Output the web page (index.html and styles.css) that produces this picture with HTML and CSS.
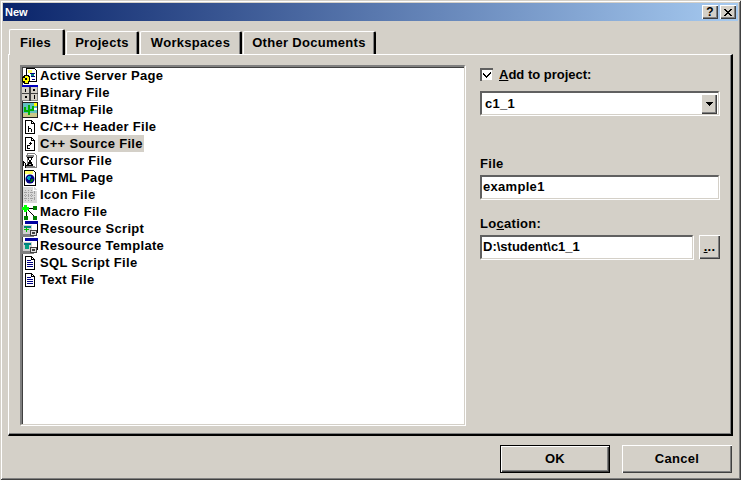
FILE: index.html
```html
<!DOCTYPE html>
<html lang="en">
<head>
<meta charset="utf-8">
<title>New</title>
<link rel="stylesheet" href="styles.css">
</head>
<body>
<div class="window">
  <div class="titlebar">
    <span class="title">New</span>
    <span class="tbtn">?</span>
    <span class="tbtn tclose">
      <svg width="8" height="7" viewBox="0 0 8 7" shape-rendering="crispEdges"><path fill="#000" d="M0 0h2v1h1v1h2V1h1V0h2v1H7v1H6v1H5v1h1v1h1v1h1v1H6V6H5V5H3v1H2v1H0V6h1V5h1V4h1V3H2V2H1V1H0z"/></svg>
    </span>
  </div>
  <div class="tabs">
    <div class="tab active">Files</div>
    <div class="tab w73">Projects</div>
    <div class="tab w102">Workspaces</div>
    <div class="tab w133">Other Documents</div>
  </div>
  <div class="panel">
    <ul class="list">
      <li class="row"><svg class="ico" width="16" height="16" viewBox="0 0 16 16" shape-rendering="crispEdges"><path fill="#fff" stroke="#000" d="M4.500 .5h8l2 2v11h-10z"/><rect x="6" y="2" width="4" height="3" fill="#ffff66"/><path fill="#000080" d="M8 5h5v1H8zM9 8h4v1H9zM10 11h3v1h-3z"/><path fill="#008080" d="M9 6h3v2H9z"/><path fill="#000" d="M2 7h5v1h1v6H7v2H2v-1H1v-1H0V9h1V8h1z"/><path fill="#ffff00" d="M3 8h3v1h1v4H6v2H3v-2H1v-3h2z"/><rect x="3" y="10" width="2" height="2" fill="#000"/></svg><span>Active Server Page</span></li>
      <li class="row"><svg class="ico" width="16" height="16" viewBox="0 0 16 16" shape-rendering="crispEdges"><rect width="16" height="2" fill="#0000c0"/><rect y="2" width="16" height="14" fill="#d4d0c8"/><path fill="#808080" d="M0 15h16v1H0zM15 2h1v14h-1z"/><path fill="#404040" d="M7 2h2v14H7zM0 8h16v1H0z"/><path fill="#000" d="M3 4h1v3H3zM11 4h2v2h-2zM3 11h2v2H3zM12 10h1v4h-1z"/></svg><span>Binary File</span></li>
      <li class="row"><svg class="ico" width="16" height="16" viewBox="0 0 16 16" shape-rendering="crispEdges"><rect width="16" height="16" fill="#202020"/><rect x="1" y="1" width="14" height="14" fill="#60c0c0"/><rect x="1" y="11" width="14" height="4" fill="#c8c888"/><path fill="#00b000" d="M6 3h2v10H6zM2 5h2v3h2v2H2zM10 4h2v5H8V7h2z"/><rect x="12" y="1" width="3" height="3" fill="#ffff00"/><rect x="12" y="6" width="3" height="2" fill="#fff"/></svg><span>Bitmap File</span></li>
      <li class="row"><svg class="ico" width="16" height="16" viewBox="0 0 16 16" shape-rendering="crispEdges"><path fill="#fff" stroke="#000" d="M3.500 1.500h6l3 3v10h-9z"/><path fill="none" stroke="#000" d="M9.500 1.500v3h3"/><path fill="#000" d="M6 7h1v6H6zM7 9h2v1H7zM9 10h1v3H9z"/></svg><span>C/C++ Header File</span></li>
      <li class="row"><svg class="ico" width="16" height="16" viewBox="0 0 16 16" shape-rendering="crispEdges"><path fill="#fff" stroke="#000" d="M3.500 1.500h6l3 3v10h-9z"/><path fill="none" stroke="#000" d="M9.500 1.500v3h3"/><path fill="#000" d="M8 6h1v1h1v1H9v1H8V8H7V7h1zM5 9h3v1H6v2h2v1H5z"/></svg><span class="selected">C++ Source File</span></li>
      <li class="row"><svg class="ico" width="16" height="16" viewBox="0 0 16 16" shape-rendering="crispEdges"><path fill="#fff" stroke="#808080" d="M5.500 .5h7l2 2v12h-9z"/><path fill="#808080" d="M4 2h8v2H4zM3 13h10v2H3z"/><path fill="#000" d="M5 4h6v1h-1v2H9v2h1v2h1v2H5v-2h1V9h1V7H6V5H5z"/><rect x="7" y="5" width="2" height="2" fill="#fff"/><rect x="7" y="11" width="2" height="1" fill="#c0c0c0"/><path fill="#000" d="M1 8h1v1h1v1h1v2h1v1H4v2H3v-3H2v1H1z"/><path fill="#fff" d="M2 10h1v2H2z"/></svg><span>Cursor File</span></li>
      <li class="row"><svg class="ico" width="16" height="16" viewBox="0 0 16 16" shape-rendering="crispEdges"><path fill="#fff" stroke="#000" d="M2.500 .5h9l2 2v13h-11z"/><path fill="#ffff66" d="M3 1h8v3H3z"/><circle cx="8" cy="9" r="4.500" fill="#000080" shape-rendering="auto"/><path fill="#00a0c0" d="M6 6h3v2H8v2H6V9H5V7h1z"/><path fill="#008000" d="M9 9h2v2h-1v1H8v-1h1z"/></svg><span>HTML Page</span></li>
      <li class="row"><svg class="ico" width="16" height="16" viewBox="0 0 16 16" shape-rendering="crispEdges"><path fill="#d8d8d8" d="M1 0h11l3 3v13H1z"/><path fill="none" stroke="#a0a0a0" stroke-dasharray="1 1" d="M3.500 3v11M6.500 3v11M9.500 3v11M12.500 4v10M2 5.500h12M2 8.500h12M2 11.500h12"/><path fill="#fff" d="M11 0h1v3h3v1h-4z"/></svg><span>Icon File</span></li>
      <li class="row"><svg class="ico" width="16" height="16" viewBox="0 0 16 16" shape-rendering="crispEdges"><path stroke="#000" fill="none" d="M5 4.500h6M4.500 6v6M6 6l6 6"/><path fill="#00ff00" d="M2 1h3v2h2v3H5v2H2V6H0V3h2z"/><rect x="11" y="2" width="4" height="4" fill="#008000"/><rect y="12" x="2" width="4" height="4" fill="#008000"/><rect x="11" y="12" width="4" height="4" fill="#008000"/></svg><span>Macro File</span></li>
      <li class="row"><svg class="ico" width="16" height="16" viewBox="0 0 16 16" shape-rendering="crispEdges"><path fill="#808080" d="M0 4h12v12H0z"/><rect x="3" width="13" height="12" fill="#fff"/><rect x="3" width="13" height="3" fill="#0000a0"/><path fill="#000" d="M15 3h1v9h-1z"/><rect x="1" y="4" width="9" height="9" fill="#d0d0d0"/><path fill="#008080" d="M2 5h7v2H2z"/><path fill="#00c000" d="M4 6h1v2h2v1H5v2H4V9H2V8h2z"/><rect x="8" y="9" width="7" height="6" fill="#e0e0e0"/><path fill="#404040" d="M8 9h7v1H8zM8 14h7v1H8zM8 9h1v6H8zM14 9h1v6h-1zM10 11h3v2h-3z"/></svg><span>Resource Script</span></li>
      <li class="row"><svg class="ico" width="16" height="16" viewBox="0 0 16 16" shape-rendering="crispEdges"><path fill="#808080" d="M0 4h12v12H0z"/><rect x="3" width="13" height="12" fill="#fff"/><rect x="3" width="13" height="3" fill="#0000a0"/><path fill="#000" d="M15 3h1v9h-1z"/><rect x="1" y="4" width="9" height="9" fill="#d0d0d0"/><path fill="#008080" d="M2 5h7v2H2z"/><path fill="#00a080" d="M3 7h4v4H3z"/><rect x="8" y="9" width="7" height="6" fill="#e0e0e0"/><path fill="#404040" d="M8 9h7v1H8zM8 14h7v1H8zM8 9h1v6H8zM14 9h1v6h-1zM10 11h3v2h-3z"/></svg><span>Resource Template</span></li>
      <li class="row"><svg class="ico" width="16" height="16" viewBox="0 0 16 16" shape-rendering="crispEdges"><path fill="#fff" stroke="#000" d="M3.500 1.500h6l3 3v10h-9z"/><path fill="none" stroke="#000" d="M9.500 1.500v3h3"/><path fill="#000080" d="M5 5h4v1H5zM5 7h6v1H5zM5 9h6v1H5zM5 11h6v1H5z"/></svg><span>SQL Script File</span></li>
      <li class="row"><svg class="ico" width="16" height="16" viewBox="0 0 16 16" shape-rendering="crispEdges"><path fill="#fff" stroke="#000" d="M3.500 1.500h6l3 3v10h-9z"/><path fill="none" stroke="#000" d="M9.500 1.500v3h3"/><path fill="#000080" d="M5 5h4v1H5zM5 7h6v1H5zM5 9h6v1H5zM5 11h6v1H5z"/></svg><span>Text File</span></li>
    </ul>
    <div class="side">
      <div class="check-row">
        <span class="check"><svg width="9" height="9" viewBox="0 0 9 9" shape-rendering="crispEdges"><path fill="#000" d="M8 1v2H7v1H6v1H5v1H4v1H3V6H2V5H1V4H0V2h1v1h1v1h1v1h1V4h1V3h1V2h1V1z"/></svg></span>
        <span class="tight"><u>A</u>dd to project:</span>
      </div>
      <div class="field combo">
        <span class="value">c1_1</span>
        <span class="arrow"><svg width="7" height="4" viewBox="0 0 7 4" shape-rendering="crispEdges"><path fill="#000" d="M0 0h7v1H6v1H5v1H4v1H3V3H2V2H1V1H0z"/></svg></span>
      </div>
      <label class="label l-file">File</label>
      <div class="field"><span class="value">example1</span></div>
      <label class="label l-loc">Lo<u>c</u>ation:</label>
      <div class="loc-row">
        <div class="field grow"><span class="value tight">D:\student\c1_1</span></div>
        <div class="browse"><u>.</u>..</div>
      </div>
    </div>
  </div>
  <div class="footer">
    <div class="btn default">OK</div>
    <div class="btn">Cancel</div>
  </div>
</div>
</body>
</html>
```
FILE: styles.css
```css
html, body {
  margin: 0;
  padding: 0;
}
body {
  width: 741px;
  height: 480px;
  overflow: hidden;
  background: #d4d0c8;
  color: #000;
  font: bold 13px/16px "Liberation Sans", Arial, sans-serif;
  letter-spacing: 0.3px;
}
.window {
  box-sizing: border-box;
  width: 741px;
  height: 480px;
  padding: 3px;
  background: #d4d0c8;
  box-shadow: inset 1px 1px 0 #d4d0c8, inset -1px -1px 0 #404040, inset 2px 2px 0 #fff, inset -2px -2px 0 #808080;
}
.titlebar {
  display: flex;
  align-items: center;
  height: 18px;
  padding-right: 2px;
  gap: 2px;
  background: linear-gradient(90deg, #0a246a, #a6caf0);
  color: #fff;
}
.title {
  flex: 1;
  padding-left: 2px;
  font-size: 11px;
  letter-spacing: 0;
}
.tbtn {
  box-sizing: border-box;
  display: flex;
  align-items: center;
  justify-content: center;
  width: 16px;
  height: 14px;
  background: #d4d0c8;
  color: #000;
  font-size: 12px;
  line-height: 12px;
  box-shadow: inset 1px 1px 0 #fff, inset -1px -1px 0 #404040, inset -2px -2px 0 #808080;
}
.tabs {
  display: flex;
  align-items: flex-end;
  height: 25px;
  margin: 8px 0 0 6px;
  position: relative;
  z-index: 1;
}
.tab {
  box-sizing: border-box;
  display: flex;
  align-items: center;
  justify-content: center;
  height: 23px;
  margin-left: 1px;
  background: #d4d0c8;
  border-top: 1px solid #fff;
  border-left: 1px solid #fff;
  border-right: 2px solid #000;
  border-radius: 2px 2px 0 0;
  box-shadow: inset -1px 0 0 #808080;
}
.tab.active {
  width: 56px;
  height: 26px;
  margin: 0 0 -1px 0;
  padding-right: 2px;
}
.w73 {
  width: 73px;
}
.w102 {
  width: 102px;
}
.w133 {
  width: 133px;
}
.panel {
  box-sizing: border-box;
  display: flex;
  align-items: flex-start;
  width: 725px;
  height: 382px;
  margin-left: 5px;
  padding: 10px 11px 0;
  border-top: 1px solid #fff;
  border-left: 1px solid #fff;
  border-right: 2px solid #000;
  border-bottom: 2px solid #000;
  box-shadow: inset -1px -1px 0 #808080;
}
.list {
  box-sizing: border-box;
  flex: none;
  width: 445px;
  height: 360px;
  margin: 0 1px 0 0;
  padding: 0;
  list-style: none;
  background: #fff;
  border-top: 2px solid #808080;
  border-left: 2px solid #808080;
  border-right: 1px solid #d4d0c8;
  border-bottom: 1px solid #d4d0c8;
  box-shadow: inset 1px 1px 0 #404040, 1px 1px 0 #fff;
}
.row {
  display: flex;
  align-items: center;
  height: 17px;
}
.ico {
  flex: none;
}
.row span {
  padding: 0 1px 0 2px;
  height: 17px;
  line-height: 17px;
}
.row .selected {
  background: #d4d0c8;
}
.side {
  display: flex;
  flex-direction: column;
  width: 240px;
  margin-left: 14px;
}
.tight {
  letter-spacing: 0;
}
.check-row {
  display: flex;
  align-items: center;
  gap: 6px;
  height: 13px;
  margin-top: 3px;
}
.check {
  box-sizing: border-box;
  display: flex;
  align-items: center;
  justify-content: center;
  width: 13px;
  height: 13px;
  background: #fff;
  border-top: 2px solid #606060;
  border-left: 2px solid #606060;
  box-shadow: inset -1px -1px 0 #d4d0c8;
}
.field {
  box-sizing: border-box;
  display: flex;
  align-items: center;
  height: 24px;
  margin-right: 1px;
  padding: 0 0 2px 1px;
  background: #fff;
  border-top: 2px solid #606060;
  border-left: 2px solid #606060;
  border-right: 1px solid #d4d0c8;
  border-bottom: 1px solid #d4d0c8;
  box-shadow: 1px 1px 0 #fff;
}
.combo {
  justify-content: space-between;
  margin-top: 10px;
  padding: 0 1px 0 3px;
}
.arrow {
  box-sizing: border-box;
  display: flex;
  align-items: center;
  justify-content: center;
  width: 16px;
  height: 20px;
  background: #d4d0c8;
  box-shadow: inset 1px 1px 0 #fff, inset -1px -1px 0 #404040, inset -2px -2px 0 #808080;
}
.label {
  display: block;
  height: 16px;
}
.l-file {
  margin-top: 41px;
  margin-bottom: 3px;
}
.l-loc {
  margin-top: 17px;
  margin-bottom: 3px;
}
.loc-row {
  display: flex;
  gap: 5px;
}
.grow {
  flex: 1;
}
.browse {
  box-sizing: border-box;
  display: flex;
  align-items: center;
  justify-content: center;
  width: 21px;
  height: 24px;
  background: #d4d0c8;
  box-shadow: inset 1px 1px 0 #fff, inset -1px -1px 0 #404040, inset -2px -2px 0 #808080;
}
.footer {
  display: flex;
  justify-content: flex-end;
  gap: 12px;
  margin-top: 9px;
  padding-right: 6px;
}
.btn {
  box-sizing: border-box;
  display: flex;
  align-items: center;
  justify-content: center;
  width: 110px;
  height: 28px;
  background: #d4d0c8;
  box-shadow: inset 1px 1px 0 #fff, inset -1px -1px 0 #404040, inset -2px -2px 0 #808080;
}
.default {
  border: 1px solid #000;
}
```
